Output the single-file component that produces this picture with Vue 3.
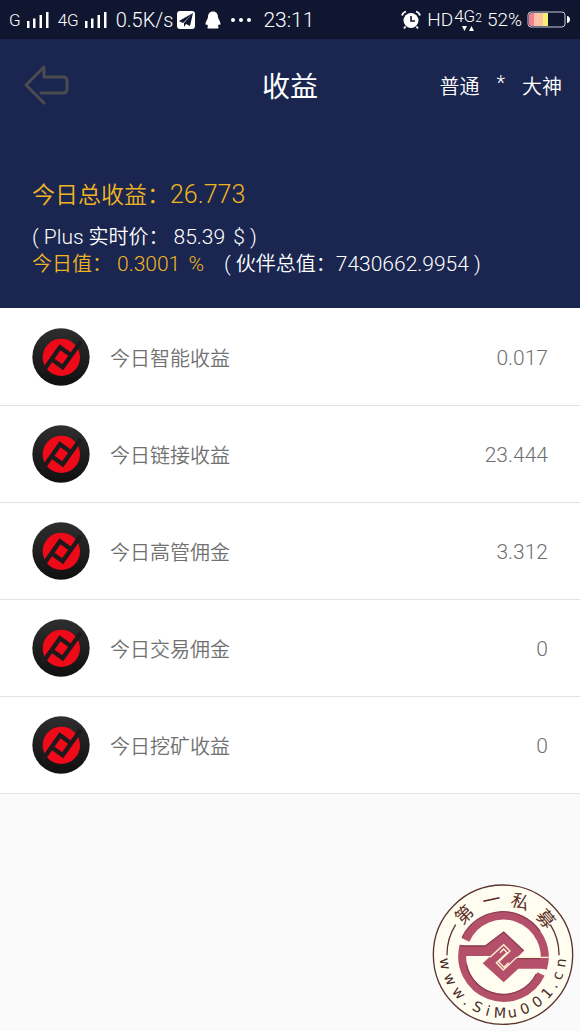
<template>
  <div class="page">
    <div class="status-bar">
      <div class="status-left">
        <span class="carrier">G</span>
        <svg class="signal" viewBox="0 0 23 17">
          <path d="M1 10h2.500v7H1zM7 7.500h2.500V17H7zM13.500 4H16v13h-2.500zM20 1h2.500v16H20z" />
        </svg>
        <span class="carrier">4G</span>
        <svg class="signal" viewBox="0 0 23 17">
          <path d="M1 10h2.500v7H1zM7 7.500h2.500V17H7zM13.500 4H16v13h-2.500zM20 1h2.500v16H20z" />
        </svg>
        <span class="speed">0.5K/s</span>
        <svg class="app-icon" viewBox="0 0 18 18">
          <rect width="18" height="18" rx="3" fill="#fff" />
          <path d="M16 2 2 10l4 2zM16 2 7 12v4l2-3 4 2z" fill="#10162f" />
        </svg>
        <svg class="app-icon" viewBox="0 0 18 18">
          <path
            d="M9 0.500c-3.500 0-5 2.500-5 5.500 0 2-2.500 4-2.500 7 0 1 .6 1.200 1.500.3.300 1 .8 1.500 1.300 2-1.500.8-1.300 2.200.4 2.200H13.300c1.700 0 1.900-1.400.4-2.200.5-.5 1-1 1.300-2 .9.900 1.500.7 1.500-.3 0-3-2.500-5-2.500-7 0-3-1.500-5.500-5-5.500z"
            fill="#fff"
          />
        </svg>
        <svg class="dots" viewBox="0 0 20 4">
          <circle cx="2" cy="2" r="2" />
          <circle cx="10" cy="2" r="2" />
          <circle cx="18" cy="2" r="2" />
        </svg>
        <span class="clock">23:11</span>
      </div>
      <div class="status-right">
        <svg class="alarm" viewBox="0 0 20 20">
          <circle cx="10" cy="10.500" r="7.500" fill="#fff" />
          <path d="M1 5.500C1.500 3.500 3 2 5 1.500M19 5.500C18.500 3.500 17 2 15 1.500M4.500 16.500 3 18.500M15.500 16.500l1.500 2" fill="none" stroke="#fff" stroke-width="1.800" />
          <path d="M10 6v5h4" fill="none" stroke="#10162f" stroke-width="1.600" />
        </svg>
        <span class="hd">HD</span>
        <span class="network">
          <span class="network-type">4G<small>2</small></span>
          <svg class="network-arrows" viewBox="0 0 14 5">
            <path d="M1 0h5L3.500 5zM8 5h5L10.500 0z" />
          </svg>
        </span>
        <span class="percent">52%</span>
        <svg class="battery" viewBox="0 0 44 17">
          <rect x="1" y="1" width="37" height="15" rx="3" fill="none" stroke="#c5c8d4" />
          <rect x="2" y="2" width="7" height="13" rx="2" fill="#f08090" />
          <rect x="7" y="2" width="9" height="13" fill="#fbc3a4" />
          <rect x="16" y="2" width="5" height="13" fill="#f8ee77" />
          <path d="M40 5c2 0 3 2 3 3.500S42 12 40 12z" fill="#fff" />
        </svg>
      </div>
    </div>

    <header class="header">
      <nav class="nav">
        <button class="back" type="button" aria-label="返回">
          <svg viewBox="0 0 46 40">
            <path d="M20 38 2 20 20 2v10h19q4 0 4 4v8q0 4-4 4H17" />
          </svg>
        </button>
        <h1 class="title">收益</h1>
        <div class="levels">
          <span>普通</span>
          <span>*</span>
          <span>大神</span>
        </div>
      </nav>
      <div class="summary">
        <p class="total">今日总收益：<span class="total-num">26.773</span></p>
        <p class="line">
          <span class="num">( Plus</span> 实时价：<span class="num price">85.39 <span class="unit">$ )</span></span>
        </p>
        <p class="line">
          <span class="gold">今日值：<span class="num rate">0.3001 <span class="unit">%</span></span></span>
          <span class="partner"><span class="num">( </span>伙伴总值：<span class="num">7430662.9954 )</span></span>
        </p>
      </div>
    </header>

    <ul class="list">
      <li v-for="item in items" :key="item.name" class="row">
        <svg class="coin" viewBox="0 0 174 174">
          <defs>
            <linearGradient id="coin-bg" x1="0" y1="0" x2="0" y2="1">
              <stop offset="0" stop-color="#2e2e2e" />
              <stop offset="1" stop-color="#101010" />
            </linearGradient>
          </defs>
          <circle cx="87" cy="87" r="86" fill="url(#coin-bg)" />
          <circle cx="88" cy="88" r="56" fill="#ee0a18" />
          <path class="coin-mark" d="M30 134 84 58 117 82M146 42 92 118 59 94" />
        </svg>
        <span class="name">{{ item.name }}</span>
        <span class="num value">{{ item.value }}</span>
      </li>
    </ul>

    <svg class="seal" viewBox="22 26 426 426">
      <circle cx="235" cy="238" r="209" fill="#fffdf0" stroke="#5a3530" stroke-width="4" />
      <path class="seal-line" d="M67 240A168 168 0 0 1 93 148M403 240A168 168 0 0 0 377 148" />
      <g class="seal-mark">
        <path class="seal-ring" d="M123 194A124 124 0 0 1 355 280M349 296A124 124 0 0 1 117 211" />
        <path
          class="seal-fill"
          d="M104 211H182L237 169 298 226 276 248H372L365 280H281L237 321 174 264 198 242H112z"
        />
        <path class="seal-shade" d="M106 212H182L237 170 297 226M112 187A135 135 0 0 1 346 168M125 266A112 112 0 0 0 335 296M280 250H346" />
        <path class="seal-gap" d="M196 246 237 208 256 227 222 259 238 276 252 262M372 246H276L236 284 215 262 247 232 237 221 226 232" />
      </g>
      <text
        v-for="c in sealTop"
        :key="c.char"
        class="seal-cn"
        x="235"
        y="90"
        :transform="`rotate(${c.angle} 235 238)`"
      >{{ c.char }}</text>
      <text
        v-for="(c, i) in sealBottom"
        :key="i"
        class="seal-url"
        x="235"
        y="428"
        :transform="`rotate(${c.angle} 235 238)`"
      >{{ c.char }}</text>
    </svg>
  </div>
</template>

<script setup>
import { ref } from 'vue'

const items = ref([
  { name: '今日智能收益', value: '0.017' },
  { name: '今日链接收益', value: '23.444' },
  { name: '今日高管佣金', value: '3.312' },
  { name: '今日交易佣金', value: '0' },
  { name: '今日挖矿收益', value: '0' }
])

// 印章文字沿圆周排列
const sealTop = [
  { char: '第', angle: -44 },
  { char: '一', angle: -12 },
  { char: '私', angle: 18 },
  { char: '募', angle: 50 }
]

const angles = [81, 65, 49, 38, 26, 15, 3, -9, -22, -36, -49, -59, -69, -82]
const sealBottom = 'www.SiMu001.cn'.split('').map((char, i) => ({
  char,
  angle: angles[i]
}))
</script>

<style>
body {
  background: #fafafa;
}
</style>

<style scoped>
.page {
  position: relative;
  min-height: 100vh;
  background: #fafafa;
  font-family: Roboto, "Noto Sans CJK SC", sans-serif;
  font-size: 20px;
  font-weight: 350;
}

.status-bar {
  display: flex;
  align-items: center;
  justify-content: space-between;
  height: 39px;
  padding: 0 9px;
  background: #10162f;
  color: #fff;
  font-size: 19px;
}

.status-left,
.status-right {
  display: flex;
  align-items: center;
}

.carrier {
  font-size: 17px;
}

.signal {
  width: 23px;
  height: 17px;
  margin: 0 9px 0 5px;
  fill: #fff;
}

.speed {
  font-size: 20px;
}

.app-icon {
  width: 18px;
  height: 18px;
  margin-left: 4px;
}

.app-icon + .app-icon {
  margin-left: 9px;
}

.dots {
  width: 20px;
  height: 4px;
  margin: 0 12px 0 9px;
  fill: #fff;
}

.clock {
  font-size: 21px;
}

.alarm {
  width: 20px;
  height: 20px;
  margin-right: 6px;
}

.network {
  display: flex;
  flex-direction: column;
  align-items: center;
  margin: 0 5px 0 1px;
}

.network-type {
  font-size: 17px;
  line-height: 16px;
}

.network-type small {
  font-size: 12px;
}

.network-arrows {
  width: 14px;
  height: 5px;
  fill: #fff;
}

.battery {
  width: 44px;
  height: 17px;
  margin-left: 5px;
}

.header {
  height: 269px;
  background: #1a264f;
  color: #fff;
}

.nav {
  display: grid;
  grid-template-columns: 1fr auto 1fr;
  align-items: center;
  height: 92px;
  padding: 0 18px;
}

.back {
  justify-self: start;
  width: 46px;
  height: 40px;
  margin-left: 6px;
  padding: 0;
  border: 0;
  background: none;
  cursor: pointer;
}

.back svg {
  display: block;
  fill: none;
  stroke: #4b4b50;
  stroke-width: 3;
  stroke-linejoin: round;
  stroke-linecap: round;
}

.title {
  margin: 0;
  font-size: 28px;
  font-weight: 400;
}

.levels {
  display: flex;
  justify-content: flex-end;
  gap: 17px;
}

.summary {
  padding: 46px 32px 0;
}

.total {
  margin: 0;
  color: #f0b422;
  font-size: 23px;
  line-height: 36px;
}

.total-num {
  font-size: 25px;
}

.line {
  margin: 0;
  line-height: 27px;
  white-space: nowrap;
}

.total + .line {
  margin-top: 10px;
}

.num {
  font-size: 21px;
}

.price,
.rate {
  margin-left: 5px;
}

.unit {
  margin-left: 3px;
}

.gold {
  color: #f0b422;
}

.partner {
  margin-left: 20px;
}

.list {
  margin: 0;
  padding: 1px 0 0;
  background: #fff;
  list-style: none;
}

.row {
  display: flex;
  align-items: center;
  height: 96px;
  padding: 0 32px;
  border-bottom: 1px solid #e2e2e2;
  color: #707070;
}

.coin {
  width: 58px;
  height: 58px;
  margin-right: 20px;
}

.coin-mark {
  fill: none;
  stroke: #1c1a1b;
  stroke-width: 13;
}

.value {
  margin-left: auto;
  padding-top: 2px;
}

.seal {
  position: absolute;
  right: 6px;
  bottom: 5px;
  width: 142px;
  height: 142px;
}

.seal-line {
  fill: none;
  stroke: #5a3530;
  stroke-width: 4;
}

.seal-ring {
  fill: none;
  stroke: #b5506a;
  stroke-width: 24;
}

.seal-fill {
  fill: #b5506a;
}

.seal-shade {
  fill: none;
  stroke: #8a3c52;
  stroke-width: 4;
}

.seal-gap {
  fill: none;
  stroke: #fff3d2;
  stroke-width: 4;
}

.seal-cn {
  fill: #5c2e26;
  font-size: 54px;
  font-weight: 400;
  text-anchor: middle;
}

.seal-url {
  fill: #4a2c28;
  font-family: "DejaVu Sans", sans-serif;
  font-size: 43px;
  font-weight: 400;
  text-anchor: middle;
}
</style>
